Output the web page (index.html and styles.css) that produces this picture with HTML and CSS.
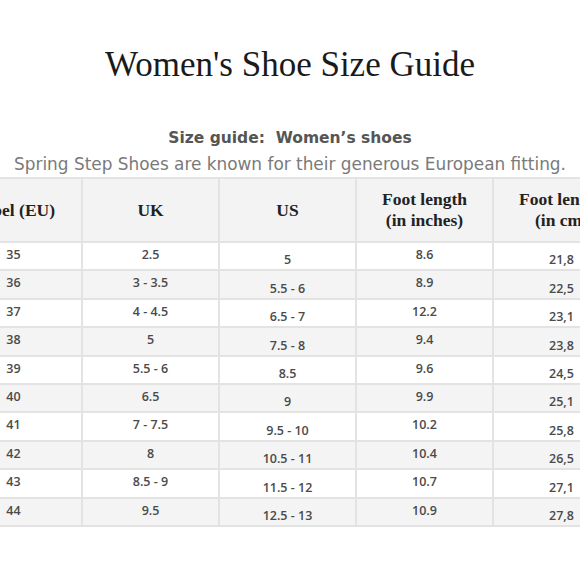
FILE: index.html
```html
<!DOCTYPE html>
<html>
<head>
<meta charset="utf-8">
<link rel="stylesheet" href="styles.css">
</head>
<body>
<div class="page">
  <h1 class="title">Women's Shoe Size Guide</h1>
  <p class="sub">Size guide:&nbsp; Women’s shoes</p>
  <p class="note">Spring Step Shoes are known for their generous European fitting.</p>
  <table class="sizes">
    <thead>
      <tr><th>Label (EU)</th><th>UK</th><th>US</th><th>Foot length<br>(in inches)</th><th>Foot length<br>(in cm)</th></tr>
    </thead>
    <tbody>
      <tr><td class="eu">35</td><td class="uk">2.5</td><td class="us">5</td><td class="in">8.6</td><td class="cm">21,8</td></tr>
      <tr><td class="eu">36</td><td class="uk">3 - 3.5</td><td class="us">5.5 - 6</td><td class="in">8.9</td><td class="cm">22,5</td></tr>
      <tr><td class="eu">37</td><td class="uk">4 - 4.5</td><td class="us">6.5 - 7</td><td class="in">12.2</td><td class="cm">23,1</td></tr>
      <tr><td class="eu">38</td><td class="uk">5</td><td class="us">7.5 - 8</td><td class="in">9.4</td><td class="cm">23,8</td></tr>
      <tr><td class="eu">39</td><td class="uk">5.5 - 6</td><td class="us">8.5</td><td class="in">9.6</td><td class="cm">24,5</td></tr>
      <tr><td class="eu">40</td><td class="uk">6.5</td><td class="us">9</td><td class="in">9.9</td><td class="cm">25,1</td></tr>
      <tr><td class="eu">41</td><td class="uk">7 - 7.5</td><td class="us">9.5 - 10</td><td class="in">10.2</td><td class="cm">25,8</td></tr>
      <tr><td class="eu">42</td><td class="uk">8</td><td class="us">10.5 - 11</td><td class="in">10.4</td><td class="cm">26,5</td></tr>
      <tr><td class="eu">43</td><td class="uk">8.5 - 9</td><td class="us">11.5 - 12</td><td class="in">10.7</td><td class="cm">27,1</td></tr>
      <tr><td class="eu">44</td><td class="uk">9.5</td><td class="us">12.5 - 13</td><td class="in">10.9</td><td class="cm">27,8</td></tr>
    </tbody>
  </table>
</div>
</body>
</html>
```
FILE: styles.css
```css
html, body {
  margin: 0;
  padding: 0;
  background: #fff;
}
body {
  width: 580px;
  height: 580px;
  overflow: hidden;
}
.page {
  padding-top: 44px;
}
.title {
  margin: 0;
  text-align: center;
  font-family: "Liberation Serif", serif;
  font-weight: normal;
  font-size: 35px;
  line-height: 42px;
  color: #1a1a1a;
}
.sub {
  margin: 42px 0 0;
  text-align: center;
  font-family: "DejaVu Sans", sans-serif;
  font-weight: 700;
  font-size: 15.5px;
  line-height: 20px;
  color: #555;
}
.note {
  margin: 6px 0 0;
  text-align: center;
  font-family: "DejaVu Sans", sans-serif;
  font-size: 16.9px;
  line-height: 20px;
  color: #7a7a7a;
  white-space: nowrap;
}
.sizes {
  width: 687px;
  margin: 3px 0 0 -56px;
  border-collapse: collapse;
  table-layout: fixed;
}
.sizes th, .sizes td {
  border: 2px solid #e3e3e3;
  text-align: center;
  padding: 0;
}
.sizes th {
  height: 62px;
  background: #f3f3f3;
  font-family: "Liberation Serif", serif;
  font-weight: 700;
  font-size: 17.5px;
  line-height: 21px;
  color: #222;
}
.sizes td {
  height: 22.4px;
  font-family: "Open Sans", sans-serif;
  font-weight: 600;
  font-size: 12.5px;
  line-height: 16px;
  color: #4a4a4a;
}
.sizes tbody tr:nth-child(even) td {
  background: #f4f4f4;
}
.sizes td.eu, .sizes td.uk, .sizes td.in {
  vertical-align: top;
  padding-top: 4px;
}
.sizes td.us, .sizes td.cm {
  vertical-align: bottom;
  padding-bottom: 1px;
}
```
